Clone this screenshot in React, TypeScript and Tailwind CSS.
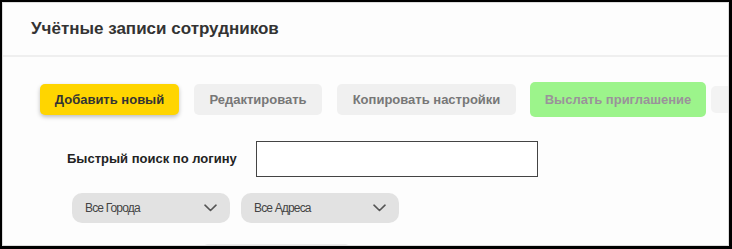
import React from "react";

function Chevron() {
  return (
    <svg width="13" height="8" viewBox="0 0 13 8" fill="none">
      <path d="M1 1.2 L6.5 6.5 L12 1.2" stroke="#555" strokeWidth="1.6" strokeLinecap="round" strokeLinejoin="round" />
    </svg>
  );
}

function Select({ label, width }: { label: string; width: string }) {
  return (
    <div className={`flex h-[30px] shrink-0 ${width} items-center justify-between rounded-[10px] bg-[#e2e2e2] pl-[13px] pr-[13px]`}>
      <span className="text-[12px] tracking-[-0.07em] text-[#444]" style={{ fontFamily: '"Liberation Sans Narrow", "Liberation Sans", Arial, sans-serif' }}>
        {label}
      </span>
      <Chevron />
    </div>
  );
}

export default function App() {
  return (
    <div
      className="h-[249px] w-[732px] bg-black pb-[3px] pl-[2px] pr-[3px] pt-[2px]"
      style={{ fontFamily: '"Liberation Sans", Arial, sans-serif' }}
    >
      <div className="flex h-full w-full flex-col overflow-hidden border border-[#dcdcdc] bg-[#fdfdfd]">
        <div className="flex h-[54px] shrink-0 items-center border-b-2 border-[#efefef] pl-[28px]">
          <span className="text-[17px] font-bold text-[#333]">Учётные записи сотрудников</span>
        </div>
        <div className="mt-[25px] flex h-[35px] shrink-0 items-center pl-[37px]">
          <div className="flex h-[31px] w-[139px] shrink-0 items-center justify-center rounded-[5px] bg-[#ffd500] text-[13px] font-bold text-[#333] shadow-[0_2px_4px_rgba(0,0,0,0.25)]">
            Добавить новый
          </div>
          <div className="ml-[15px] flex h-[31px] w-[128px] shrink-0 items-center justify-center rounded-[5px] bg-[#f0f0f0] text-[13px] font-bold text-[#777]">
            Редактировать
          </div>
          <div className="ml-[15px] flex h-[31px] w-[179px] shrink-0 items-center justify-center rounded-[5px] bg-[#f0f0f0] text-[13px] font-bold text-[#777]">
            Копировать настройки
          </div>
          <div className="ml-[14px] flex h-[35px] w-[176px] shrink-0 items-center justify-center rounded-[5px] bg-[#9cf48b] text-[13px] font-bold text-[#9a929a]">
            Выслать приглашение
          </div>
          <div className="ml-[5px] h-[27px] w-[40px] shrink-0 rounded-[5px] bg-[#f3f3f3]" />
        </div>
        <div className="mt-[24px] flex h-[36px] shrink-0 items-center pl-[64px]">
          <span className="text-[13px] font-bold text-[#222]">Быстрый поиск по логину</span>
          <div className="ml-[19px] h-[36px] w-[282px] shrink-0 border border-[#444] bg-white" />
        </div>
        <div className="mt-[16px] flex shrink-0 gap-[11px] pl-[69px]">
          <Select label="Все Города" width="w-[158px]" />
          <Select label="Все Адреса" width="w-[158px]" />
        </div>
        <div className="mt-[21px] flex shrink-0 pl-[200px]">
          <div className="h-[10px] w-[147px] shrink-0 rounded-[8px] bg-[#ececec]" />
        </div>
      </div>
    </div>
  );
}
